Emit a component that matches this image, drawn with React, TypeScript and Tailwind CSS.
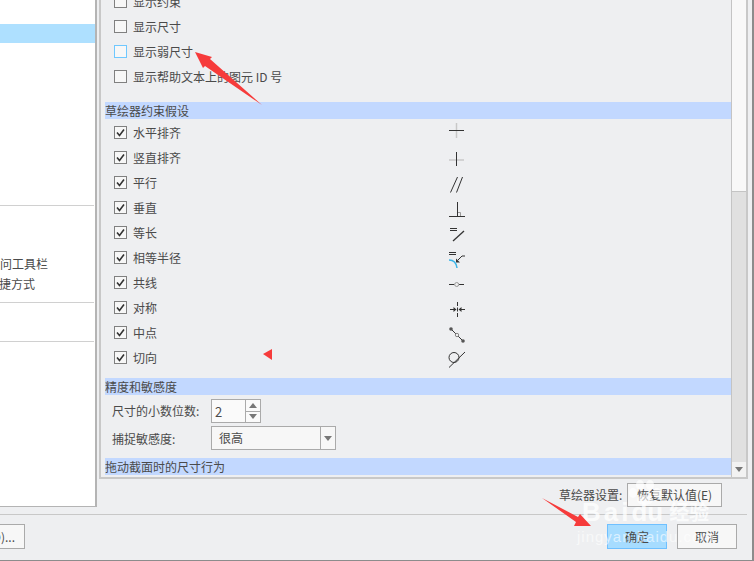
import { FC, ReactNode } from "react";

const cjk = "font-['Noto_Sans_CJK_SC','Noto_Sans',sans-serif]";

// Constraint icons, drawn in an 18x18 box centred on their row
const ink = "#333333";
const icons: ReactNode[] = [
  <>
    <path d="M8.5 -1V14" stroke="#c8c8c8" strokeWidth="1.5" />
    <path d="M1 6.5H16" stroke={ink} />
  </>,
  <>
    <path d="M1 11H16" stroke="#c8c8c8" strokeWidth="1.5" />
    <path d="M8.5 3V17" stroke={ink} />
  </>,
  <path d="M2.5 18.5L9.5 3M8.5 18.5L14.5 3" stroke={ink} />,
  <>
    <path d="M9.5 13.5H12.5V17" stroke="#999" fill="none" />
    <path d="M9.5 3V17" stroke={ink} />
    <path d="M1 17.5H17" stroke={ink} />
  </>,
  <>
    <path d="M2 4.5H9M2 6.5H9" stroke={ink} />
    <path d="M5 17L16 7" stroke={ink} strokeWidth="1.3" />
  </>,
  <>
    <path d="M1 3.5H8M1 5.5H8" stroke={ink} />
    <path d="M1 11Q8 11 9 19" stroke="#3ab5e8" strokeWidth="1.5" fill="none" />
    <path d="M17 7H14L10 11" stroke={ink} fill="none" />
    <path d="M8 13.5V9.5L12 13.5Z" fill={ink} />
  </>,
  <>
    <path d="M1 10.5H6.5M11 10.5H16" stroke={ink} />
    <circle cx="8.7" cy="10.5" r="2" fill="#eee" stroke="#999" />
  </>,
  <>
    <path d="M9.5 3V18" stroke={ink} strokeDasharray="4 1.5" />
    <path d="M2 10.5H7M17 10.5H12" stroke={ink} />
    <path d="M8.5 10.5L5.5 8V13ZM10.5 10.5L13.5 8V13Z" fill={ink} />
  </>,
  <>
    <path d="M3 5L15 17" stroke={ink} />
    <circle cx="3" cy="5" r="1.8" fill="#555" />
    <circle cx="15" cy="17" r="1.8" fill="#555" />
    <circle cx="9" cy="11" r="1.7" fill="#eee" stroke="#888" />
  </>,
  <>
    <circle cx="6" cy="8.5" r="5" fill="none" stroke={ink} />
    <path d="M1 18.5L17 3" stroke={ink} />
  </>,
];

const constraints = [
  "水平排齐",
  "竖直排齐",
  "平行",
  "垂直",
  "等长",
  "相等半径",
  "共线",
  "对称",
  "中点",
  "切向",
];

const Check: FC<{ checked?: boolean; active?: boolean }> = ({ checked, active }) => (
  <span
    className={`flex h-[13px] w-[13px] shrink-0 items-center justify-center border bg-[#f7f7f7] ${
      active ? "border-[#6fc8ff]" : "border-[#808080]"
    }`}
  >
    {checked && (
      <svg viewBox="0 0 11 11" className="h-[11px] w-[11px]">
        <path d="M2 5.5L4.5 8.5L9 2.5" fill="none" stroke="#333" strokeWidth="1.6" />
      </svg>
    )}
  </span>
);

const Row: FC<{ label: string; checked?: boolean; active?: boolean; icon?: ReactNode }> = ({
  label,
  checked,
  active,
  icon,
}) => (
  <div className="flex h-[25px] items-center gap-[6px] pl-[9px]">
    <Check checked={checked} active={active} />
    <span className="w-[310px] whitespace-nowrap">{label}</span>
    {icon && (
      <svg viewBox="0 0 18 18" fill="none" className="mt-px h-[18px] w-[18px] -translate-x-px overflow-visible">
        {icon}
      </svg>
    )}
  </div>
);

const Section: FC<{ title: string; className?: string }> = ({ title, className }) => (
  <div className={`h-[17px] bg-[#c2d8ff] leading-[17px] ${className ?? ""}`}>{title}</div>
);

const Triangle: FC<{ up?: boolean }> = ({ up }) => (
  <span
    className={`h-0 w-0 border-x-[4px] border-x-transparent ${
      up ? "border-b-[5px] border-b-[#777]" : "border-t-[5px] border-t-[#777]"
    }`}
  />
);

const LeftPanel = () => (
  <div className="h-[507px] w-[97px] shrink-0 overflow-hidden border-r-2 border-b border-[#b4b4b4] bg-white">
    <div className="mt-[24px] h-[19px] bg-[#aee0ff]" />
    <div className="mt-[162px] mr-px h-px bg-[#d0d0d0]" />
    <div className="mt-[48px] -ml-[36px] h-[20px] whitespace-nowrap leading-[20px]">快速访问工具栏</div>
    <div className="-ml-[37px] h-[20px] whitespace-nowrap leading-[20px]">键盘快捷方式</div>
    <div className="mt-[8px] mr-px h-px bg-[#d0d0d0]" />
    <div className="mt-[38px] mr-px h-px bg-[#d0d0d0]" />
  </div>
);

const Scrollbar = () => (
  <div className="flex w-[15px] shrink-0 flex-col border-l border-[#c4c4c4] bg-[#e0e0e0]">
    <div className="h-[192px] border-b border-[#c4c4c4] bg-[#f8f8f8]" />
    <div className="flex-1" />
    <div className="flex h-[15px] items-center justify-center bg-[#f2f2f2]">
      <Triangle />
    </div>
  </div>
);

const Options = () => (
  <div className="flex h-[479px] border-b-2 border-l-2 border-r-2 border-[#c8c8c8] pl-[4px]">
    <div className="min-w-0 flex-1 overflow-hidden">
      <div className="-mt-[11px]">
        <Row label="显示约束" />
        <Row label="显示尺寸" />
        <Row label="显示弱尺寸" active />
        <Row label="显示帮助文本上的图元 ID 号" />
      </div>
      <Section title="草绘器约束假设" className="mt-[13px]" />
      <div className="mt-px">
        {constraints.map((label, i) => (
          <Row key={label} label={label} checked icon={icons[i]} />
        ))}
      </div>
      <Section title="精度和敏感度" className="mt-2" />
      <div className="mt-[4px] flex h-[24px] pl-[7px]">
        <span className="w-[99px] leading-[24px]">尺寸的小数位数:</span>
        <div className="flex w-[50px] border border-[#aaa] bg-[#fafafa]">
          <span className="flex-1 pl-[3px] text-[13px] leading-[24px]">2</span>
          <div className="flex w-[15px] flex-col border-l border-[#aaa]">
            <span className="flex flex-1 items-center justify-center border-b border-[#aaa]">
              <Triangle up />
            </span>
            <span className="flex flex-1 items-center justify-center">
              <Triangle />
            </span>
          </div>
        </div>
      </div>
      <div className="mt-[3px] flex h-[24px] pl-[7px]">
        <span className="w-[99px] leading-[26px]">捕捉敏感度:</span>
        <div className="flex w-[125px] border border-[#aaa] bg-[#f7f7f7]">
          <span className="flex-1 pl-[7px] leading-[22px]">很高</span>
          <span className="flex w-[15px] items-center justify-center border-l border-[#aaa]">
            <Triangle />
          </span>
        </div>
      </div>
      <Section title="拖动截面时的尺寸行为" className="mt-2" />
    </div>
    <Scrollbar />
  </div>
);

const Overlays = () => (
  <>
    {/* Baidu watermark */}
    <div className="pointer-events-none absolute left-[582px] top-[495px] flex items-center whitespace-nowrap text-white/75">
      <span className="font-['Liberation_Sans',sans-serif] text-[26px] font-bold leading-[34px] tracking-[3px]">
        Bai
      </span>
      <span className="font-['Liberation_Sans',sans-serif] text-[26px] font-bold leading-[34px]">du</span>
      <span className="ml-[6px] text-[20px] font-bold leading-[34px]">经验</span>
    </div>
    <svg viewBox="0 0 40 28" className="pointer-events-none absolute left-[625px] top-[479px] h-[28px] w-[40px]" fill="#ffffff" fillOpacity="0.65">
      <ellipse cx="8" cy="14" rx="4" ry="5" />
      <ellipse cx="15" cy="6" rx="4" ry="5" />
      <ellipse cx="25" cy="6" rx="4" ry="5" />
      <ellipse cx="32" cy="14" rx="4" ry="5" />
      <ellipse cx="20" cy="21" rx="8" ry="5" />
    </svg>
    <div className="pointer-events-none absolute left-[577px] top-[528px] whitespace-nowrap font-['Liberation_Sans',sans-serif] text-[15px] leading-[18px] tracking-[1px] text-white/60">
      jingyan.baidu.com
    </div>
    {/* Red annotation marks */}
    <svg viewBox="0 0 754 561" className="pointer-events-none absolute inset-0 h-[561px] w-[754px]">
      <polygon points="195,52 212,57 210,59 262,105 205,66 203,68" fill="#f63b3b" />
      <polygon points="263,354 272,349 272,360" fill="#f63b3b" />
      <polygon points="591,526 574,526 576,522 542,498 578,517 580,514" fill="#f63b3b" />
    </svg>
  </>
);

const App = () => (
  <div
    className={`relative h-[561px] w-[754px] overflow-hidden border-r-2 border-b border-[#8c8c8c] bg-[#eeeff1] text-[12px] text-[#4a4a4a] ${cjk}`}
  >
    <div className="flex">
      <LeftPanel />
      <div className="ml-[2px] w-[649px] shrink-0">
        <Options />
        <div className="mt-[4px] flex h-[24px] items-center pl-[460px]">
          <span className="w-[68px] whitespace-nowrap">草绘器设置:</span>
          <button className="h-[24px] w-[95px] border border-[#aaa] bg-[#f7f7f7]">恢复默认值(E)</button>
        </div>
      </div>
    </div>
    <div className="mt-[7px] h-px w-[747px] bg-[#c8c8c8]" />
    <div className="mt-[9px] flex h-[25px]">
      <button className="-ml-[50px] h-[25px] w-[75px] whitespace-nowrap border border-[#aaa] bg-[#f7f7f7] pr-[9px] text-right">
        环境(O)...
      </button>
      <button className="ml-[582px] h-[25px] w-[60px] border border-[#6fc0ff] bg-[#a6dcff]">确定</button>
      <button className="ml-[10px] h-[25px] w-[60px] border border-[#aaa] bg-[#f7f7f7]">取消</button>
    </div>
    <Overlays />
  </div>
);

export default App;
